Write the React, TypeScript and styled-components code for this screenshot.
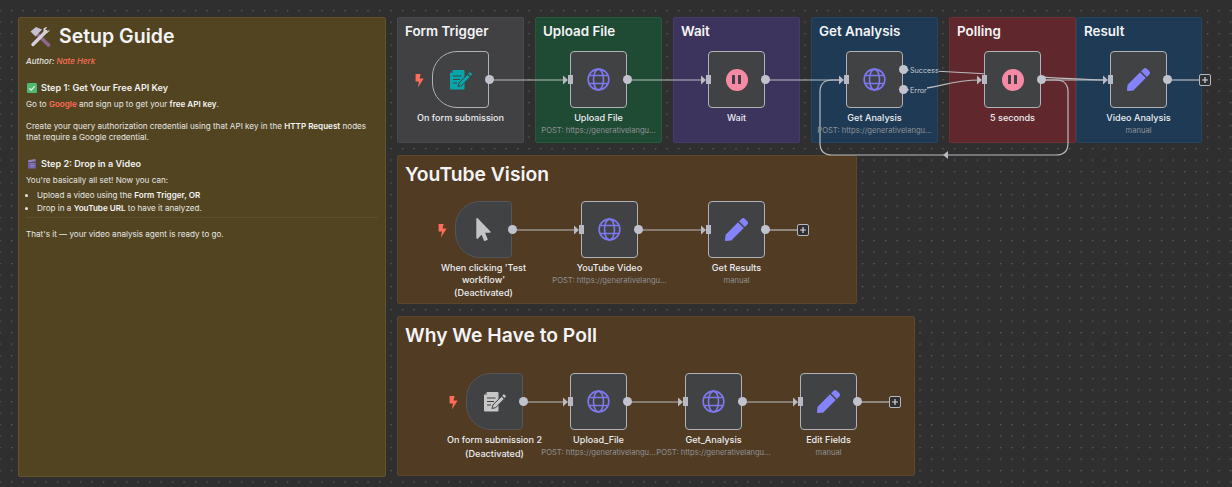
import React from 'react';
import styled, { createGlobalStyle } from 'styled-components';
import { FaPen, FaMousePointer } from 'react-icons/fa';

const GlobalStyle = createGlobalStyle`
  html, body {
    margin: 0;
    padding: 0;
    background: #2e2e2e;
  }
  * {
    box-sizing: border-box;
  }
`;

const Canvas = styled.div`
  position: relative;
  width: 1232px;
  height: 487px;
  overflow: hidden;
  font-family: Inter, "Liberation Sans", sans-serif;
  background-color: #2e2f2e;
  background-image: radial-gradient(circle at 0.6px 0.6px, #5c5c5c 0.7px, transparent 1px);
  background-size: 11.5px 11.5px;
  background-position: -0.6px 10px;
`;

const Sticky = styled.div<{ $x: number; $y: number; $w: number; $h: number; $bg: string; $line: string }>`
  position: absolute;
  left: ${p => p.$x}px;
  top: ${p => p.$y}px;
  width: ${p => p.$w}px;
  height: ${p => p.$h}px;
  padding: 4px 7px;
  background: ${p => p.$bg};
  border: 1px solid ${p => p.$line};
  border-radius: 2px;
`;

const StickyTitle = styled.h2<{ $big?: boolean }>`
  margin: ${p => (p.$big ? '1px 0 0' : '0')};
  font-size: ${p => (p.$big ? 19.3 : 13.4)}px;
  line-height: ${p => (p.$big ? 26 : 18)}px;
  font-weight: 600;
  color: #f4f4f6;
`;

const GuideHeader = styled.div`
  display: flex;
  align-items: center;
  gap: 8px;
  padding: 1px 0 0 3px;
  font-size: 19.5px;
  line-height: 26px;
  font-weight: 600;
  color: #f4f4f6;
`;

const Author = styled.p`
  margin: 7px 0 0;
  font-size: 8px;
  line-height: 11px;
  font-style: italic;
  font-weight: 500;
  color: #e6e6e6;
`;

const Step = styled.h3`
  display: flex;
  align-items: center;
  gap: 4px;
  margin: 15px 0 0;
  padding-left: 1px;
  font-size: 9.1px;
  line-height: 12px;
  font-weight: 600;
  color: #f0f0f0;
`;

const Para = styled.p<{ $gap?: number }>`
  margin: ${p => p.$gap ?? 5}px 0 0;
  font-size: 8.1px;
  line-height: 11px;
  font-weight: 400;
  color: #e6e6e6;

  b {
    font-weight: 600;
    color: #f4f4f4;
  }
`;

const Accent = styled.span`
  color: #ff6d5a;
  font-weight: 600;
`;

const AuthorName = styled.span`
  color: #ff6d5a;
`;

const Bullets = styled.ul`
  margin: 4px 0 0;
  padding: 0 0 0 11px;
  list-style: disc;
  font-size: 8.1px;
  line-height: 11px;
  color: #e6e6e6;

  li {
    margin-bottom: 2px;
  }

  b {
    font-weight: 600;
    color: #f4f4f4;
  }
`;

const Rule = styled.hr`
  margin: 3px 0 0;
  border: 0;
  border-top: 1px solid #5e4f28;
`;

const Edges = styled.svg`
  position: absolute;
  left: 0;
  top: 0;
`;

const NodeWrap = styled.div<{ $x: number; $y: number }>`
  position: absolute;
  left: ${p => p.$x}px;
  top: ${p => p.$y}px;
  width: 57px;
  display: flex;
  flex-direction: column;
  align-items: center;
`;

const NodeBox = styled.div<{ $trigger?: boolean; $off?: boolean }>`
  position: relative;
  width: 57px;
  height: 57px;
  flex: none;
  display: flex;
  align-items: center;
  justify-content: center;
  background: #414244;
  border: 1.5px solid ${p => (p.$off ? '#54565c' : '#b0b2b8')};
  border-radius: ${p => (p.$trigger ? '25px 4px 4px 25px' : '4px')};
`;

const Output = styled.span<{ $top?: number }>`
  position: absolute;
  right: -6px;
  top: ${p => p.$top ?? 22.5}px;
  width: 9px;
  height: 9px;
  border-radius: 50%;
  background: #c0c3cd;
`;

const Input = styled.span`
  position: absolute;
  left: -3.5px;
  top: 23px;
  width: 5px;
  height: 9px;
  background: #b6b9c3;
`;

const Bolt = styled.svg`
  position: absolute;
  left: -18px;
  top: 22px;
`;

const Label = styled.div`
  margin-top: 4px;
  width: max-content;
  max-width: 104px;
  font-size: 9.1px;
  line-height: 11.6px;
  font-weight: 500;
  text-align: center;
  color: #eceef2;
`;

const SubLabel = styled.div`
  margin-top: 2px;
  width: max-content;
  font-size: 7.6px;
  line-height: 10px;
  color: #8f9197;
`;

const Deactivated = styled.div`
  margin-top: 2px;
  width: max-content;
  font-size: 9.1px;
  line-height: 12px;
  font-weight: 500;
  color: #eceef2;
`;

const PauseBadge = styled.span`
  display: flex;
  align-items: center;
  justify-content: center;
  gap: 2.5px;
  width: 22px;
  height: 22px;
  border-radius: 50%;
  background: #f48aa5;
`;

const PauseBar = styled.i`
  display: block;
  width: 3.2px;
  height: 9px;
  border-radius: 0.5px;
  background: #3f4044;
`;

const PlusBox = styled.div<{ $x: number; $y: number }>`
  position: absolute;
  left: ${p => p.$x}px;
  top: ${p => p.$y}px;
  width: 12px;
  height: 12px;
  display: flex;
  align-items: center;
  justify-content: center;
  background: #2e2f2e;
  border: 1px solid #b6b8be;
  border-radius: 2px;
`;

const EdgeTag = styled.span<{ $x: number; $y: number; $bg: string }>`
  position: absolute;
  left: ${p => p.$x}px;
  top: ${p => p.$y}px;
  padding: 0 0 0 1px;
  font-size: 7.2px;
  line-height: 9px;
  color: #c9ccd2;
  background: ${p => p.$bg};
`;

const GlobeIcon = () => (
  <svg width="23" height="23" viewBox="0 0 24 24" fill="none" stroke="#7d78ee" strokeWidth="1.7">
    <circle cx="12" cy="12" r="10.8" />
    <ellipse cx="12" cy="12" rx="5.2" ry="10.8" />
    <path d="M2.4 7.8h19.2M2.4 16.2h19.2" />
  </svg>
);

const FormIcon = ({ fill, ink }: { fill: string; ink: string }) => (
  <svg width="22" height="20" viewBox="0 0 22 20">
    <path d="M3 0h10.5a1 1 0 0 1 1 1v17.6a1 1 0 0 1-1 1H1a1 1 0 0 1-1-1V3z" fill={fill} />
    <path d="M3 0v3H0z" fill={ink} opacity="0.5" />
    <path d="M3 6h8.5M3 9.5h7M3 13h4" stroke={ink} strokeWidth="1.2" fill="none" />
    <path d="M8 16.5l1-3.6 8.6-8.6 2.7 2.7-8.6 8.6z" fill={fill} stroke={ink} strokeWidth="1" />
    <path d="M18.2 3.7l1-1a1 1 0 0 1 1.4 0l.9.9a1 1 0 0 1 0 1.4l-1 1z" fill={fill} />
  </svg>
);

const HammerWrench = () => (
  <svg width="22" height="21" viewBox="0 0 22 21">
    <path d="M7.5 7.5L19.5 19" stroke="#8d668c" strokeWidth="3.8" strokeLinecap="round" />
    <path d="M1.5 5.5L7 1l6 2.5-6.5 7z" fill="#c6c1d2" />
    <path d="M17 5.5L4 18.5" stroke="#d4d0dc" strokeWidth="3.4" strokeLinecap="round" />
    <path d="M14.5 2.5a4.5 4.5 0 0 1 3.8-1.6l-2 2.6 1.9 2 2.7-1.8a4.6 4.6 0 0 1-6.4 3z" fill="#d4d0dc" />
  </svg>
);

const CheckEmoji = () => (
  <svg width="10" height="10" viewBox="0 0 10 10">
    <rect width="10" height="10" rx="1.2" fill="#4fb96f" />
    <path d="M2.2 5.2l2 2 3.6-4" stroke="#e8f4ea" strokeWidth="1.2" fill="none" />
  </svg>
);

const ClapperEmoji = () => (
  <svg width="10" height="10" viewBox="0 0 10 10">
    <rect x="1" y="3.6" width="8" height="6" fill="#6f5fa8" />
    <path d="M1 1.2L8.4 0l.4 2.2L1.4 3.4z" fill="#8f80c8" />
    <path d="M3 4.8h4.4M3 6.4h4.4M3 8h4.4" stroke="#9a8cd0" strokeWidth="0.7" />
  </svg>
);

const BoltIcon = () => (
  <Bolt width="9" height="14" viewBox="0 0 9 14">
    <path d="M0.6 0H5.6L4.6 4.4H8.6L3 13.6L3.9 7.4H0.6Z" fill="#ff6d5a" />
  </Bolt>
);

const PauseIcon = () => (
  <PauseBadge>
    <PauseBar />
    <PauseBar />
  </PauseBadge>
);

const PenIcon = () => <FaPen size={23} color="#8583fb" />;

type NodeProps = {
  x: number;
  y: number;
  label: string;
  sub?: string;
  trigger?: boolean;
  off?: boolean;
  branch?: boolean;
  children: React.ReactNode;
};

const CanvasNode = ({ x, y, label, sub, trigger, off, branch, children }: NodeProps) => (
  <NodeWrap $x={x} $y={y}>
    <NodeBox $trigger={trigger} $off={off}>
      {trigger ? <BoltIcon /> : <Input />}
      {children}
      {branch ? (
        <>
          <Output $top={13} />
          <Output $top={32.5} />
        </>
      ) : (
        <Output />
      )}
    </NodeBox>
    <Label>{label}</Label>
    {sub && <SubLabel>{sub}</SubLabel>}
    {off && <Deactivated>(Deactivated)</Deactivated>}
  </NodeWrap>
);

const PlusButton = ({ x, y }: { x: number; y: number }) => (
  <PlusBox $x={x} $y={y}>
    <svg width="8" height="8" viewBox="0 0 8 8">
      <path d="M4 1v6M1 4h6" stroke="#d5d7dc" strokeWidth="1.2" />
    </svg>
  </PlusBox>
);

const POST = 'POST: https://generativelangu...';

const EDGE_PATHS = [
  'M489 80H566',
  'M627 80H704',
  'M765 80H842',
  'M903 70C960 71 1050 79 1106 80',
  'M903 90C940 90 945 80 980 80',
  'M1041 80H1056Q1068 80 1068 92V143Q1068 155 1056 155H832Q820 155 820 143V92Q820 80 832 80H842',
  'M1041 80H1106',
  'M1167 80H1199',
  'M512 230H577',
  'M638 230H704',
  'M765 230H797',
  'M523 402H566',
  'M627 402H681',
  'M742 402H796',
  'M857 402H889',
];

const ARROWS = [
  [563, 80], [701, 80], [839, 80], [977, 80], [1103, 80],
  [574, 230], [701, 230],
  [563, 402], [678, 402], [793, 402],
];

const App = () => (
  <Canvas>
    <GlobalStyle />

    <Sticky $x={18} $y={17} $w={368} $h={460} $bg="#524420" $line="#62532a">
      <GuideHeader>
        <HammerWrench />
        Setup Guide
      </GuideHeader>
      <Author>
        Author: <AuthorName>Nate Herk</AuthorName>
      </Author>
      <Step>
        <CheckEmoji />
        Step 1: Get Your Free API Key
      </Step>
      <Para>
        Go to <Accent>Google</Accent> and sign up to get your <b>free API key</b>.
      </Para>
      <Para $gap={11}>
        Create your query authorization credential using that API key in the <b>HTTP Request</b> nodes
        <br />
        that require a Google credential.
      </Para>
      <Step>
        <ClapperEmoji />
        Step 2: Drop in a Video
      </Step>
      <Para>You're basically all set! Now you can:</Para>
      <Bullets>
        <li>
          Upload a video using the <b>Form Trigger, OR</b>
        </li>
        <li>
          Drop in a <b>YouTube URL</b> to have it analyzed.
        </li>
      </Bullets>
      <Rule />
      <Para $gap={11}>That's it — your video analysis agent is ready to go.</Para>
    </Sticky>

    <Sticky $x={397} $y={17} $w={127} $h={126} $bg="#414144" $line="#4a4a4d">
      <StickyTitle>Form Trigger</StickyTitle>
    </Sticky>
    <Sticky $x={535} $y={17} $w={127} $h={126} $bg="#1f4a33" $line="#27573d">
      <StickyTitle>Upload File</StickyTitle>
    </Sticky>
    <Sticky $x={673} $y={17} $w={127} $h={126} $bg="#3c345c" $line="#453c69">
      <StickyTitle>Wait</StickyTitle>
    </Sticky>
    <Sticky $x={811} $y={17} $w={127} $h={126} $bg="#1e3a54" $line="#254461">
      <StickyTitle>Get Analysis</StickyTitle>
    </Sticky>
    <Sticky $x={949} $y={17} $w={127} $h={126} $bg="#60282d" $line="#6e3035">
      <StickyTitle>Polling</StickyTitle>
    </Sticky>
    <Sticky $x={1076} $y={17} $w={126} $h={126} $bg="#1e3a54" $line="#254461">
      <StickyTitle>Result</StickyTitle>
    </Sticky>
    <Sticky $x={397} $y={155} $w={460} $h={149} $bg="#513b22" $line="#5e4629">
      <StickyTitle $big>YouTube Vision</StickyTitle>
    </Sticky>
    <Sticky $x={397} $y={316} $w={518} $h={160} $bg="#513b22" $line="#5e4629">
      <StickyTitle $big>Why We Have to Poll</StickyTitle>
    </Sticky>

    <Edges width="1232" height="487" viewBox="0 0 1232 487" fill="none">
      {EDGE_PATHS.map(d => (
        <path key={d} d={d} stroke="#b9bbc0" strokeWidth="1.2" />
      ))}
      {ARROWS.map(([x, y]) => (
        <path key={`${x}-${y}`} d={`M${x} ${y - 4.5}L${x + 5} ${y}L${x} ${y + 4.5}Z`} fill="#b9bbc0" />
      ))}
      <path d="M948 151L943 155L948 159Z" fill="#b9bbc0" />
    </Edges>

    <CanvasNode x={432} y={51} label="On form submission" trigger>
      <FormIcon fill="#08a5aa" ink="#414244" />
    </CanvasNode>
    <CanvasNode x={570} y={51} label="Upload File" sub={POST}>
      <GlobeIcon />
    </CanvasNode>
    <CanvasNode x={708} y={51} label="Wait">
      <PauseIcon />
    </CanvasNode>
    <CanvasNode x={846} y={51} label="Get Analysis" sub={POST} branch>
      <GlobeIcon />
    </CanvasNode>
    <CanvasNode x={984} y={51} label="5 seconds">
      <PauseIcon />
    </CanvasNode>
    <CanvasNode x={1110} y={51} label="Video Analysis" sub="manual">
      <PenIcon />
    </CanvasNode>
    <PlusButton x={1199} y={74} />

    <EdgeTag $x={909} $y={65.5} $bg="#1e3a54">Success</EdgeTag>
    <EdgeTag $x={909} $y={85.5} $bg="#1e3a54">Error</EdgeTag>

    <CanvasNode x={455} y={201} label="When clicking 'Test workflow'" trigger off>
      <FaMousePointer size={23} color="#c4c4c4" />
    </CanvasNode>
    <CanvasNode x={581} y={201} label="YouTube Video" sub={POST}>
      <GlobeIcon />
    </CanvasNode>
    <CanvasNode x={708} y={201} label="Get Results" sub="manual">
      <PenIcon />
    </CanvasNode>
    <PlusButton x={797} y={224} />

    <CanvasNode x={466} y={373} label="On form submission 2" trigger off>
      <FormIcon fill="#c6c6c6" ink="#414244" />
    </CanvasNode>
    <CanvasNode x={570} y={373} label="Upload_File" sub={POST}>
      <GlobeIcon />
    </CanvasNode>
    <CanvasNode x={685} y={373} label="Get_Analysis" sub={POST}>
      <GlobeIcon />
    </CanvasNode>
    <CanvasNode x={800} y={373} label="Edit Fields" sub="manual">
      <PenIcon />
    </CanvasNode>
    <PlusButton x={889} y={396} />
  </Canvas>
);

export default App;
